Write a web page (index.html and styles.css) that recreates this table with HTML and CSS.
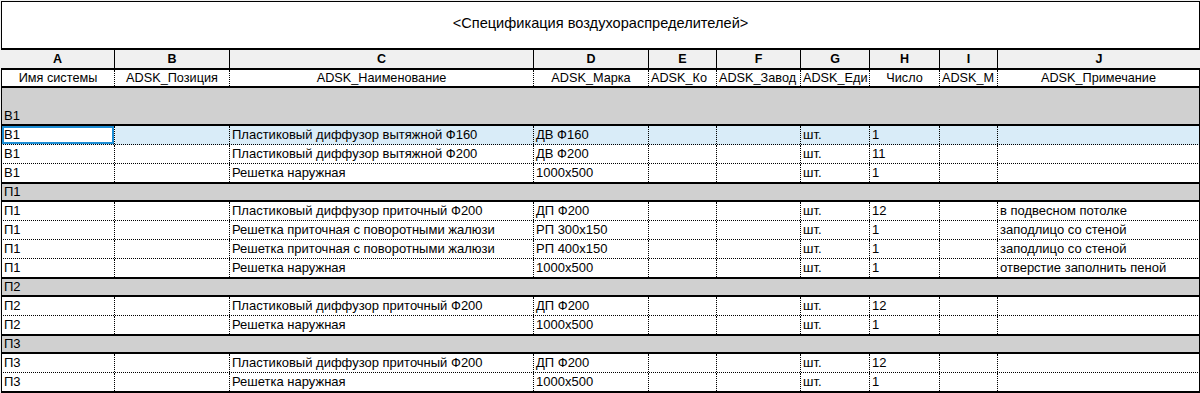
FILE: index.html
```html
<!DOCTYPE html>
<html lang="ru">
<head>
<meta charset="utf-8">
<title>Спецификация воздухораспределителей</title>
<link rel="stylesheet" href="styles.css">
</head>
<body>
<div class="sheet">
  <div class="title">&lt;Спецификация воздухораспределителей&gt;</div>

  <div class="letters">
    <div class="lc">A</div><div class="lc">B</div><div class="lc">C</div><div class="lc">D</div><div class="lc">E</div><div class="lc">F</div><div class="lc">G</div><div class="lc">H</div><div class="lc">I</div><div class="lc last">J</div>
  </div>

  <div class="row head">
    <div class="c">Имя системы</div><div class="c">ADSK_Позиция</div><div class="c">ADSK_Наименование</div><div class="c">ADSK_Марка</div><div class="c clip">ADSK_Ко</div><div class="c clip">ADSK_Завод</div><div class="c clip">ADSK_Еди</div><div class="c">Число</div><div class="c clip">ADSK_М</div><div class="c">ADSK_Примечание</div>
  </div>

  <div class="group group-top">В1</div>
  <div class="row data selected">
    <div class="c active">В1</div><div class="c"></div><div class="c">Пластиковый диффузор вытяжной Ф160</div><div class="c">ДВ Ф160</div><div class="c"></div><div class="c"></div><div class="c">шт.</div><div class="c">1</div><div class="c"></div><div class="c"></div>
  </div>
  <div class="row data">
    <div class="c">В1</div><div class="c"></div><div class="c">Пластиковый диффузор вытяжной Ф200</div><div class="c">ДВ Ф200</div><div class="c"></div><div class="c"></div><div class="c">шт.</div><div class="c">11</div><div class="c"></div><div class="c"></div>
  </div>
  <div class="row data end">
    <div class="c">В1</div><div class="c"></div><div class="c">Решетка наружная</div><div class="c">1000x500</div><div class="c"></div><div class="c"></div><div class="c">шт.</div><div class="c">1</div><div class="c"></div><div class="c"></div>
  </div>

  <div class="group">П1</div>
  <div class="row data">
    <div class="c">П1</div><div class="c"></div><div class="c">Пластиковый диффузор приточный Ф200</div><div class="c">ДП Ф200</div><div class="c"></div><div class="c"></div><div class="c">шт.</div><div class="c">12</div><div class="c"></div><div class="c">в подвесном потолке</div>
  </div>
  <div class="row data">
    <div class="c">П1</div><div class="c"></div><div class="c">Решетка приточная с поворотными жалюзи</div><div class="c">РП 300x150</div><div class="c"></div><div class="c"></div><div class="c">шт.</div><div class="c">1</div><div class="c"></div><div class="c">заподлицо со стеной</div>
  </div>
  <div class="row data">
    <div class="c">П1</div><div class="c"></div><div class="c">Решетка приточная с поворотными жалюзи</div><div class="c">РП 400x150</div><div class="c"></div><div class="c"></div><div class="c">шт.</div><div class="c">1</div><div class="c"></div><div class="c">заподлицо со стеной</div>
  </div>
  <div class="row data end">
    <div class="c">П1</div><div class="c"></div><div class="c">Решетка наружная</div><div class="c">1000x500</div><div class="c"></div><div class="c"></div><div class="c">шт.</div><div class="c">1</div><div class="c"></div><div class="c">отверстие заполнить пеной</div>
  </div>

  <div class="group">П2</div>
  <div class="row data">
    <div class="c">П2</div><div class="c"></div><div class="c">Пластиковый диффузор приточный Ф200</div><div class="c">ДП Ф200</div><div class="c"></div><div class="c"></div><div class="c">шт.</div><div class="c">12</div><div class="c"></div><div class="c"></div>
  </div>
  <div class="row data end">
    <div class="c">П2</div><div class="c"></div><div class="c">Решетка наружная</div><div class="c">1000x500</div><div class="c"></div><div class="c"></div><div class="c">шт.</div><div class="c">1</div><div class="c"></div><div class="c"></div>
  </div>

  <div class="group">П3</div>
  <div class="row data">
    <div class="c">П3</div><div class="c"></div><div class="c">Пластиковый диффузор приточный Ф200</div><div class="c">ДП Ф200</div><div class="c"></div><div class="c"></div><div class="c">шт.</div><div class="c">12</div><div class="c"></div><div class="c"></div>
  </div>
  <div class="row data end last">
    <div class="c">П3</div><div class="c"></div><div class="c">Решетка наружная</div><div class="c">1000x500</div><div class="c"></div><div class="c"></div><div class="c">шт.</div><div class="c">1</div><div class="c"></div><div class="c"></div>
  </div>
</div>
</body>
</html>
```

FILE: styles.css
```css
html, body {
  margin: 0;
  padding: 0;
}

body {
  background: #f0f0f0;
  font-family: "Liberation Sans", Arial, sans-serif;
  font-size: 13px;
  color: #000;
}

.sheet {
  margin: 1px 0 0 1px;
  width: 1199px;
  background: #fff;
}

.title {
  box-sizing: border-box;
  height: 49px;
  border: 1px solid #000;
  border-bottom-width: 2px;
  display: flex;
  align-items: center;
  justify-content: center;
  padding-bottom: 5px;
  font-size: 14.6px;
  background: #fff;
}

.letters {
  box-sizing: border-box;
  height: 20px;
  display: grid;
  grid-template-columns: 114px 115px 304px 115px 68px 84px 69px 70px 58px 202px;
  background: #f0f0f0;
  border-bottom: 2px solid #000;
}

.lc {
  box-sizing: border-box;
  border-right: 1px solid #000;
  text-align: center;
  font-weight: bold;
  font-size: 12.5px;
  line-height: 18px;
}

.lc.last {
  border-right: none;
}

.row {
  box-sizing: border-box;
  display: grid;
  grid-template-columns: 113px 115px 304px 115px 68px 84px 69px 70px 58px 201px;
  border-left: 1px solid #000;
  border-right: 1px solid #000;
  background: #fff;
}

.c {
  box-sizing: border-box;
  border-right: 1px dotted #000;
  padding: 0 2px;
  white-space: nowrap;
  overflow: hidden;
}

.c:last-child {
  border-right: none;
}

.head {
  height: 18px;
  border-bottom: 2px solid #000;
}

.head .c {
  text-align: center;
  line-height: 16px;
  padding: 0;
  font-size: 12.7px;
}

.head .c.clip {
  text-align: left;
  padding-left: 2px;
}

.group {
  box-sizing: border-box;
  height: 20px;
  background: #d0d0d0;
  border: 1px solid #000;
  border-top-width: 2px;
  border-bottom-width: 2px;
  padding-left: 2px;
  line-height: 16px;
}

.group-top {
  height: 38px;
  border-top: none;
  display: flex;
  align-items: flex-end;
  line-height: 15px;
  padding-bottom: 1px;
}

.data {
  height: 19px;
  border-bottom: 1px dotted #000;
}

.data .c {
  line-height: 18px;
}

.data.end {
  height: 18px;
  border-bottom: none;
}

.data.last {
  height: 20px;
  border-bottom: 2px solid #000;
}

.selected {
  background: #d9ecf8;
}

.c.active {
  background: #fff;
  box-shadow: inset 0 0 0 2px #1e8fd6;
}
```
